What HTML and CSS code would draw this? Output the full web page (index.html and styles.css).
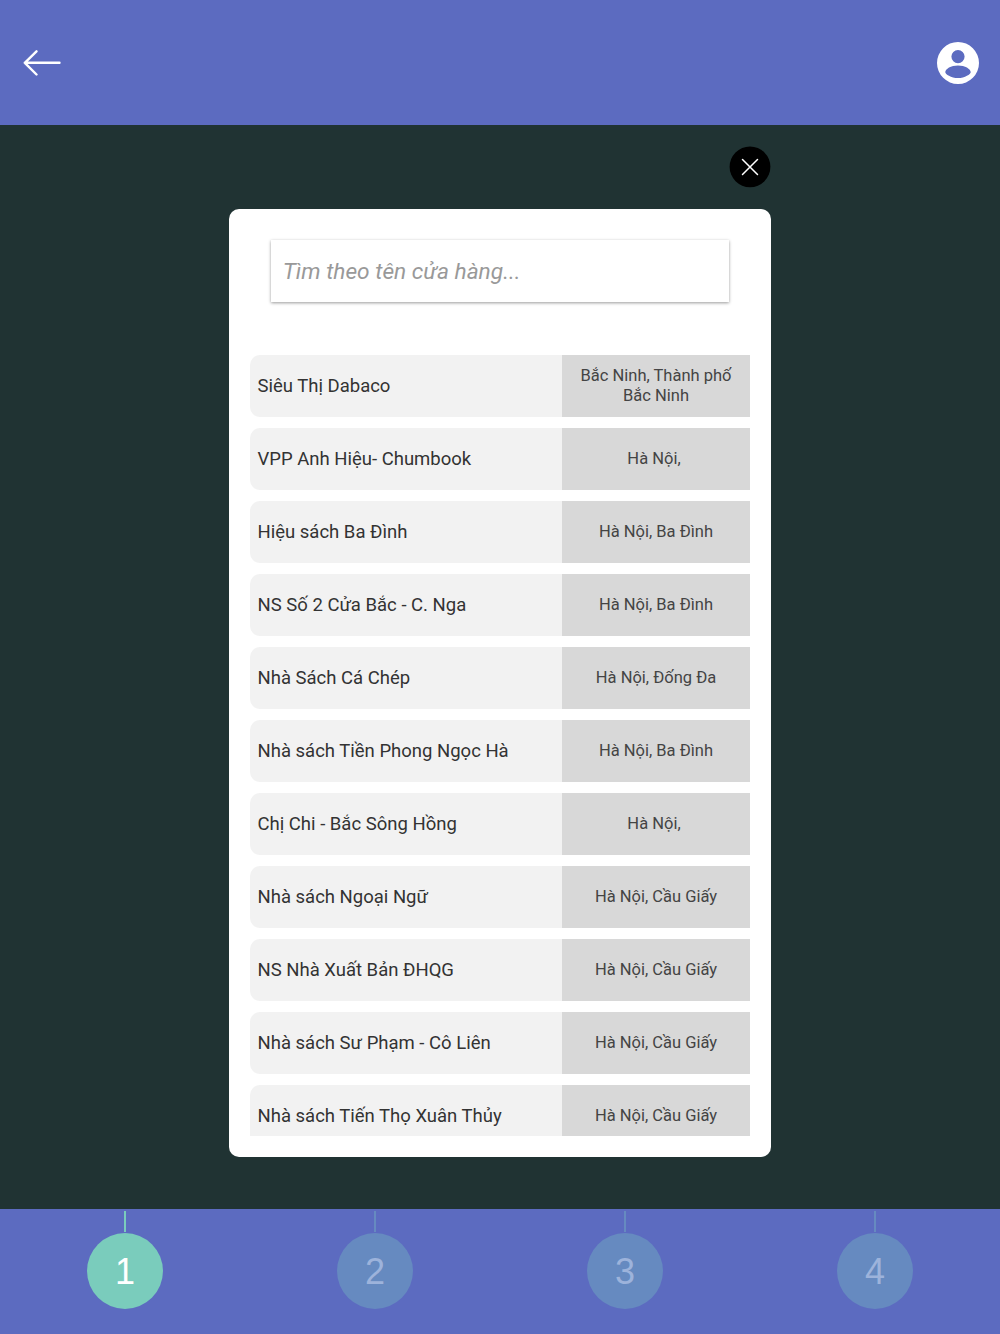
FILE: index.html
```html
<!DOCTYPE html>
<html lang="vi">
<head>
<meta charset="utf-8">
<title>Tìm cửa hàng</title>
<link rel="stylesheet" href="styles.css">
</head>
<body>
<div class="app">
  <header class="topbar">
    <svg class="back" width="38" height="26" viewBox="0 0 38 26"><path d="M13.500 1.300 1.800 12.800l11.700 11.700M1.800 12.800h34.700" fill="none" stroke="#fff" stroke-width="2.400" stroke-linecap="round" stroke-linejoin="round"/></svg>
    <svg class="user" width="42" height="42" viewBox="0 0 42 42"><path fill="#fff" fill-rule="evenodd" d="M21 0a21 21 0 1 1 0 42a21 21 0 0 1 0-42ZM21 8a6.600 6.600 0 1 0 0 13.200a6.600 6.600 0 0 0 0-13.200ZM21 23.500c-7 0-12.700 3.400-12.700 6.700c0 1.800 5.700 5.800 12.700 5.800s12.700-4 12.700-5.800c0-3.300-5.700-6.700-12.700-6.700Z"/></svg>
  </header>
  <main class="stage">
    <div class="dialog">
      <button class="close" type="button" aria-label="Đóng">
        <svg class="close-icon" width="42" height="42" viewBox="0 0 42 42"><circle cx="21" cy="20.800" r="20.400" fill="#000"/><path d="M13.500 13.500l15 15M28.500 13.500l-15 15" stroke="#fff" stroke-width="1.500" stroke-linecap="round"/></svg>
      </button>
      <section class="panel">
        <div class="search">Tìm theo tên cửa hàng...</div>
        <div class="list">
          <div class="row"><div class="name">Siêu Thị Dabaco</div><div class="place place-two">Bắc Ninh, Thành phố Bắc Ninh</div></div>
          <div class="row"><div class="name">VPP Anh Hiệu- Chumbook</div><div class="place place-short">Hà Nội,</div></div>
          <div class="row"><div class="name">Hiệu sách Ba Đình</div><div class="place">Hà Nội, Ba Đình</div></div>
          <div class="row"><div class="name">NS Số 2 Cửa Bắc - C. Nga</div><div class="place">Hà Nội, Ba Đình</div></div>
          <div class="row"><div class="name">Nhà Sách Cá Chép</div><div class="place">Hà Nội, Đống Đa</div></div>
          <div class="row"><div class="name">Nhà sách Tiền Phong Ngọc Hà</div><div class="place">Hà Nội, Ba Đình</div></div>
          <div class="row"><div class="name">Chị Chi - Bắc Sông Hồng</div><div class="place place-short">Hà Nội,</div></div>
          <div class="row"><div class="name">Nhà sách Ngoại Ngữ</div><div class="place">Hà Nội, Cầu Giấy</div></div>
          <div class="row"><div class="name">NS Nhà Xuất Bản ĐHQG</div><div class="place">Hà Nội, Cầu Giấy</div></div>
          <div class="row"><div class="name">Nhà sách Sư Phạm - Cô Liên</div><div class="place">Hà Nội, Cầu Giấy</div></div>
          <div class="row"><div class="name">Nhà sách Tiến Thọ Xuân Thủy</div><div class="place">Hà Nội, Cầu Giấy</div></div>
        </div>
      </section>
    </div>
  </main>
  <footer class="steps">
    <div class="step step-active"><span class="tick"></span><span class="num">1</span></div>
    <div class="step"><span class="tick"></span><span class="num">2</span></div>
    <div class="step"><span class="tick"></span><span class="num">3</span></div>
    <div class="step"><span class="tick"></span><span class="num">4</span></div>
  </footer>
</div>
</body>
</html>
```
FILE: styles.css
```css
* { box-sizing: border-box; }
html, body { margin: 0; padding: 0; }
body { font-family: Roboto, "Noto Sans", sans-serif; background: #203333; }
.app { width: 1000px; height: 1334px; display: flex; flex-direction: column; overflow: hidden; }

.topbar {
  height: 125px; flex: none; background: #5c6bc0;
  display: flex; align-items: center; justify-content: space-between;
  padding: 0 21px 0 23px;
}
.back, .user { display: block; }

.stage { flex: 1; background: #203333; display: flex; justify-content: center; padding-top: 21px; }
.dialog { width: 542px; display: flex; flex-direction: column; align-items: flex-end; }
.close {
  width: 42px; height: 42px; border: 0; padding: 0; margin: 0 0 20.600px;
  background: none; display: block;
}
.close-icon { display: block; }
.panel {
  width: 542px; height: 948.200px; background: #fff; border-radius: 10px;
  padding: 31.400px 21px 21px; display: flex; flex-direction: column;
}
.search {
  flex: none; height: 62.200px; margin: 0 20.700px 52.400px; padding: 0 12px;
  background: #fff; box-shadow: 0 1px 3px rgba(0,0,0,.4);
  display: flex; align-items: center;
  font-size: 22.700px; font-style: italic; font-weight: 400; color: #999;
}
.list { flex: 1; min-height: 0; overflow: hidden; display: flex; flex-direction: column; gap: 11px; }
.row { flex: none; height: 62px; display: flex; border-radius: 10px 0 0 10px; overflow: hidden; color: #333; }
.name {
  width: 312px; background: #f2f2f2; padding-left: 7.500px;
  display: flex; align-items: center; font-size: 18.500px;
}
.place {
  width: 188px; background: #d8d8d8; padding: 0 12px;
  display: flex; align-items: center; justify-content: center; text-align: center;
  font-size: 16.500px; line-height: 20px; color: #444;
}
.place-short { padding-right: 16px; }
.place-two { padding-top: 1px; }

.steps { height: 125px; flex: none; background: #5c6bc0; display: flex; }
.step { width: 250px; display: flex; flex-direction: column; align-items: center; padding-top: 2px; }
.tick { width: 2px; height: 21px; margin-bottom: 1px; background: #668ac0; }
.num {
  width: 76px; height: 76px; padding-top: 2px; border-radius: 50%; background: #668ac0;
  display: flex; align-items: center; justify-content: center;
  font-family: "Liberation Sans", Arial, sans-serif; font-size: 36px; color: #9db3db;
}
.step-active .tick { background: #7accbc; }
.step-active .num { background: #7accbc; color: #fff; }
```
